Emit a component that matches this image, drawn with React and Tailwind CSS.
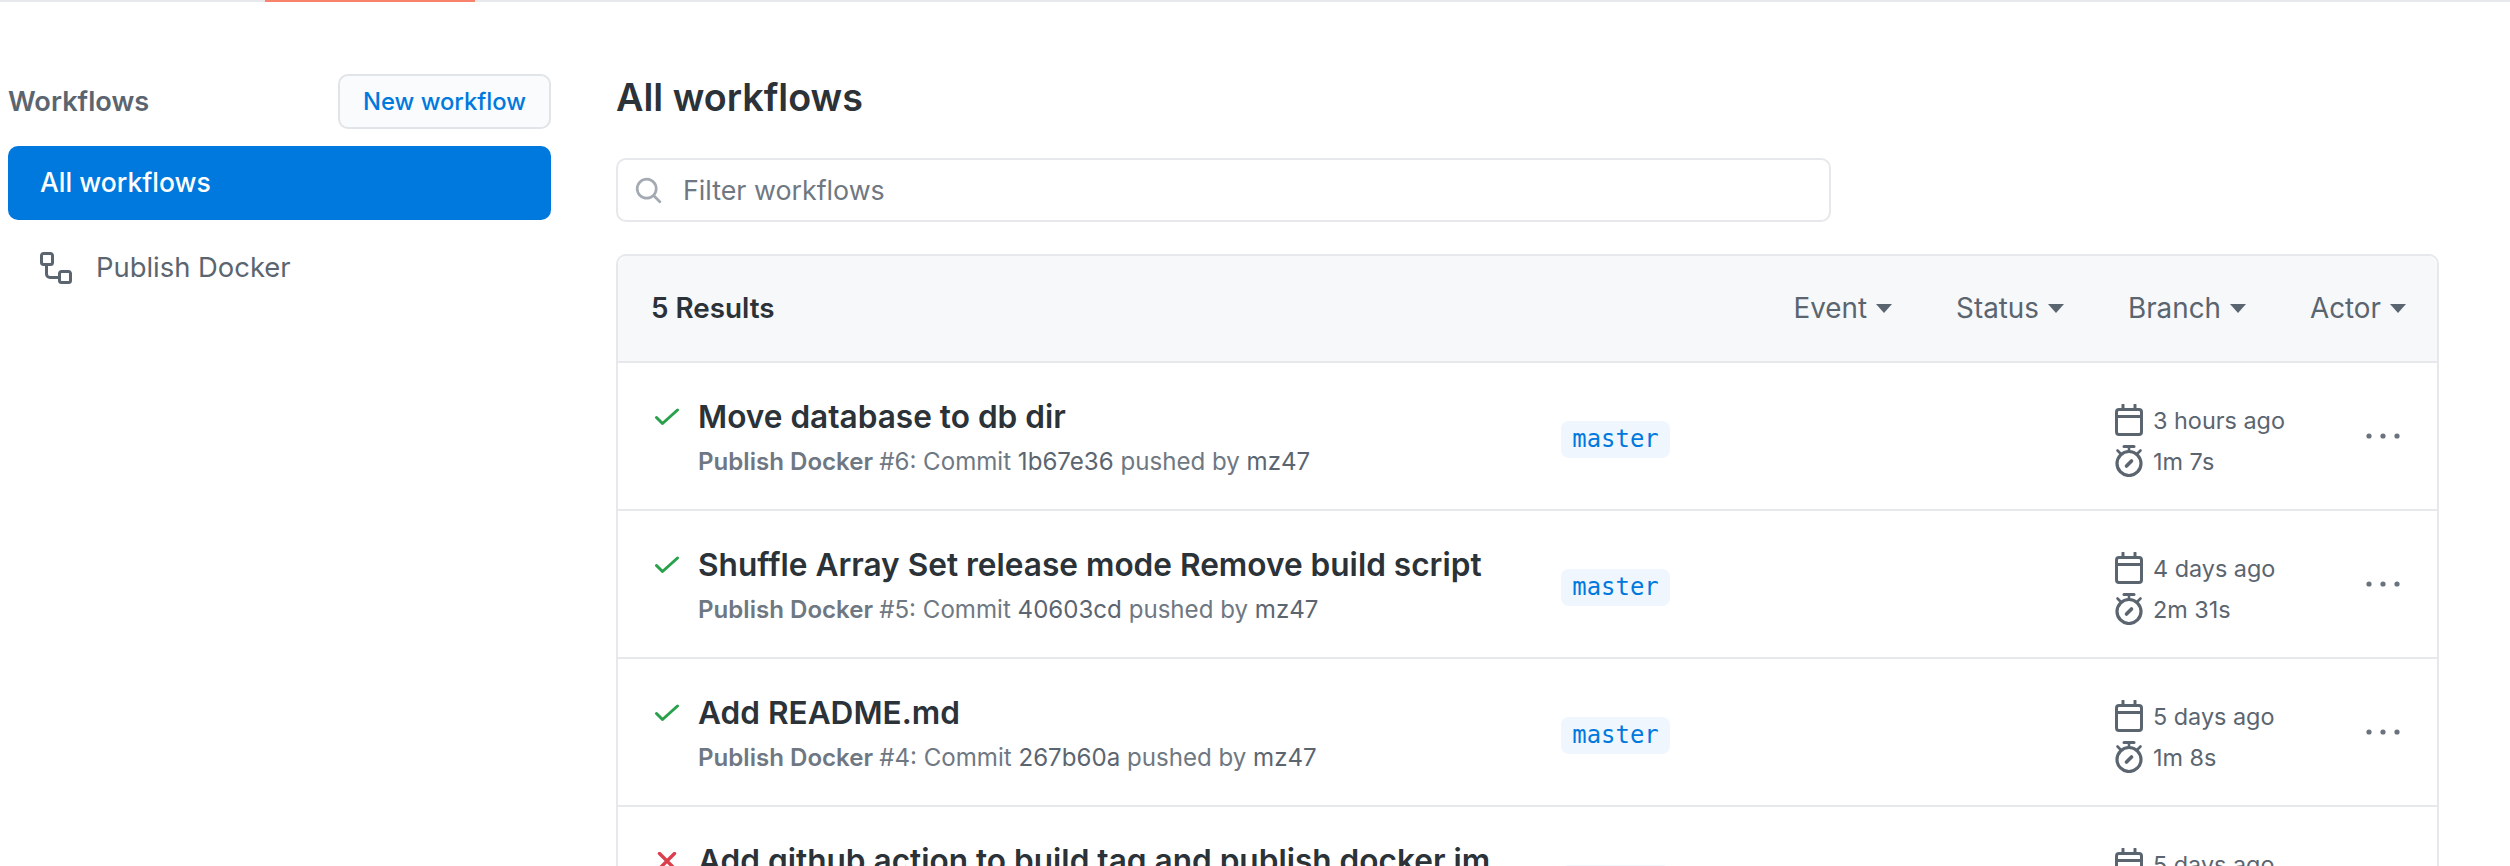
const rows = [
  { status: "ok", title: "Move database to db dir", run: "#6", commit: "1b67e36", ago: "3 hours ago", dur: "1m 7s" },
  { status: "ok", title: "Shuffle Array Set release mode Remove build script", run: "#5", commit: "40603cd", ago: "4 days ago", dur: "2m 31s" },
  { status: "ok", title: "Add README.md", run: "#4", commit: "267b60a", ago: "5 days ago", dur: "1m 8s" },
  { status: "fail", title: "Add github action to build tag and publish docker im", ago: "5 days ago" },
];

function Check() {
  return (
    <svg width="28" height="19" viewBox="0 0 28 19" fill="none" className="shrink-0">
      <path d="M3.5 9.5 L9.5 15.5 L24.5 2" stroke="#28a14a" strokeWidth="3" strokeLinecap="round" strokeLinejoin="round" />
    </svg>
  );
}

function Cross() {
  return (
    <svg width="28" height="19" viewBox="0 0 28 19" fill="none" className="shrink-0">
      <path d="M6.5 1.5 L21.5 16.5 M21.5 1.5 L6.5 16.5" stroke="#db3f4d" strokeWidth="3.4" strokeLinecap="round" />
    </svg>
  );
}

function Calendar() {
  return (
    <svg width="28" height="32" viewBox="0 0 28 32" fill="none" className="shrink-0">
      <rect x="1.5" y="5.5" width="25" height="25" rx="2.5" stroke="#5b6570" strokeWidth="3" />
      <path d="M1.5 12.5 H26.5" stroke="#5b6570" strokeWidth="3" />
      <path d="M8 1 V5 M20 1 V5" stroke="#5b6570" strokeWidth="3" strokeLinecap="round" />
    </svg>
  );
}

function Timer() {
  return (
    <svg width="28" height="32" viewBox="0 0 28 32" fill="none" className="shrink-0">
      <circle cx="14" cy="18.5" r="12" stroke="#5b6570" strokeWidth="3.2" />
      <path d="M9 1.5 H19" stroke="#5b6570" strokeWidth="3" strokeLinecap="round" />
      <path d="M14 1.5 V6 M2.5 5.5 L5.5 8.5 M25.5 5.5 L22.5 8.5" stroke="#5b6570" strokeWidth="2.6" strokeLinecap="round" />
      <path d="M11.5 21 L16.5 16" stroke="#5b6570" strokeWidth="3.6" strokeLinecap="round" />
    </svg>
  );
}

function Caret() {
  return (
    <svg width="16" height="9" viewBox="0 0 16 9" className="shrink-0">
      <path d="M0 0 H16 L8 9 Z" fill="#5b6570" />
    </svg>
  );
}

function Workflow() {
  return (
    <svg width="32" height="32" viewBox="0 0 16 16" fill="#5b6570" className="shrink-0">
      <path
        fillRule="evenodd"
        d="M0 1.75C0 .784.784 0 1.75 0h3.5C6.216 0 7 .784 7 1.75v3.5A1.75 1.75 0 015.25 7H4v4a1 1 0 001 1h4v-1.25C9 9.784 9.784 9 10.75 9h3.5c.966 0 1.75.784 1.75 1.75v3.5A1.75 1.75 0 0114.25 16h-3.5A1.75 1.75 0 019 14.25v-.75H5A2.5 2.5 0 012.5 11V7h-.75A1.75 1.75 0 010 5.25v-3.5zm1.75-.25a.25.25 0 00-.25.25v3.5c0 .138.112.25.25.25h3.5a.25.25 0 00.25-.25v-3.5a.25.25 0 00-.25-.25h-3.5zm9 9a.25.25 0 00-.25.25v3.5c0 .138.112.25.25.25h3.5a.25.25 0 00.25-.25v-3.5a.25.25 0 00-.25-.25h-3.5z"
      />
    </svg>
  );
}

function Search() {
  return (
    <svg width="29" height="29" viewBox="0 0 16 16" fill="#a3aab2" className="shrink-0">
      <path
        fillRule="evenodd"
        d="M11.5 7a4.5 4.5 0 11-9 0 4.5 4.5 0 019 0zm-.82 4.74a6 6 0 111.06-1.06l3.04 3.04a.75.75 0 11-1.06 1.06l-3.04-3.04z"
      />
    </svg>
  );
}

function Dots() {
  return (
    <svg width="34" height="6" viewBox="0 0 34 6" fill="#6a737d" className="shrink-0">
      <circle cx="3" cy="3" r="2.6" />
      <circle cx="17" cy="3" r="2.6" />
      <circle cx="31" cy="3" r="2.6" />
    </svg>
  );
}

function Filter({ label }) {
  return (
    <div className="flex items-center gap-[9px] text-[27.8px] text-[#5b6570]">
      <span>{label}</span>
      <Caret />
    </div>
  );
}

function Row({ row, last }) {
  return (
    <div className={`flex h-[148px] shrink-0 pl-[35px] ${last ? "" : "border-b-2 border-[#e6e8eb]"}`}>
      <div className="w-[45px] shrink-0 pt-[45px]">{row.status === "ok" ? <Check /> : <Cross />}</div>
      <div className="w-[863px] shrink-0 pt-[33px]">
        <div className="text-[31.6px] leading-[42px] font-semibold text-[#2b3238] whitespace-nowrap">{row.title}</div>
        {row.run && (
          <div className="mt-[7px] text-[24.1px] leading-[34px] text-[#6f7882] whitespace-nowrap">
            <span className="font-semibold">Publish Docker </span>
            {row.run}: Commit <span className="text-[#5b6570]">{row.commit}</span> pushed by{" "}
            <span className="text-[#5b6570]">mz47</span>
          </div>
        )}
      </div>
      <div className="w-[554px] shrink-0 pt-[58px]">
        <span className="inline-flex h-[37px] w-[109px] items-center justify-center rounded-[8px] bg-[#eff6fd] font-['DejaVu_Sans_Mono',monospace] text-[23.9px] text-[#0079de]">
          master
        </span>
      </div>
      <div className="w-[251px] shrink-0 pt-[41px] text-[23.4px] text-[#5b6570]">
        <div className="flex h-[32px] items-center gap-[10px]">
          <Calendar />
          <span className="pt-[1px]">{row.ago}</span>
        </div>
        {row.dur && (
          <div className="mt-[9px] flex h-[32px] items-center gap-[10px]">
            <Timer />
            <span className="pt-[1px]">{row.dur}</span>
          </div>
        )}
      </div>
      <div className="pt-[70px]">
        <Dots />
      </div>
    </div>
  );
}

export default function App() {
  return (
    <div className="h-[866px] w-[2510px] overflow-hidden bg-white font-['Inter',sans-serif]">
      <div className="flex h-[2px] bg-[#e6e8eb] pl-[265px]">
        <div className="h-full w-[210px] bg-[#f9826c]" />
      </div>
      <div className="flex pl-[8px] pt-[71px]">
        <aside className="w-[543px] shrink-0">
          <div className="flex items-center justify-between pt-[1px]">
            <h2 className="pt-[2px] text-[27.2px] font-semibold text-[#5b6570]">Workflows</h2>
            <div className="flex h-[55px] w-[213px] items-center justify-center rounded-[10px] border-2 border-[#e1e4e8] bg-[#fafbfc] text-[23.8px] font-medium text-[#0079de]">
              New workflow
            </div>
          </div>
          <div className="mt-[17px] flex h-[74px] items-center rounded-[10px] bg-[#0079de] pl-[32px] text-[26.5px] font-medium text-white">
            All workflows
          </div>
          <div className="mt-[27px] flex items-center gap-[24px] pl-[32px] text-[27.4px] text-[#5b6570]">
            <Workflow />
            <span>Publish Docker</span>
          </div>
        </aside>
        <main className="ml-[65px] w-[1823px] shrink-0">
          <h1 className="text-[37.7px] font-semibold leading-[48px] text-[#2b3238]">All workflows</h1>
          <div className="mt-[37px] flex h-[64px] w-[1215px] items-center gap-[20px] rounded-[10px] border-2 border-[#e6e8eb] pl-[16px] text-[26.8px] text-[#6f7882]">
            <Search />
            <span>Filter workflows</span>
          </div>
          <div className="mt-[32px] flex flex-col rounded-t-[10px] border-x-2 border-t-2 border-[#e6e8eb]">
            <div className="flex h-[107px] shrink-0 items-center justify-between rounded-t-[10px] border-b-2 border-[#e6e8eb] bg-[#f7f8fa] pl-[33px] pr-[31px]">
              <span className="text-[27.8px] font-semibold text-[#2b3238]">5 Results</span>
              <div className="flex items-center gap-[64px]">
                <Filter label="Event" />
                <Filter label="Status" />
                <Filter label="Branch" />
                <Filter label="Actor" />
              </div>
            </div>
            {rows.map((r, i) => (
              <Row key={i} row={r} last={i === rows.length - 1} />
            ))}
          </div>
        </main>
      </div>
    </div>
  );
}
